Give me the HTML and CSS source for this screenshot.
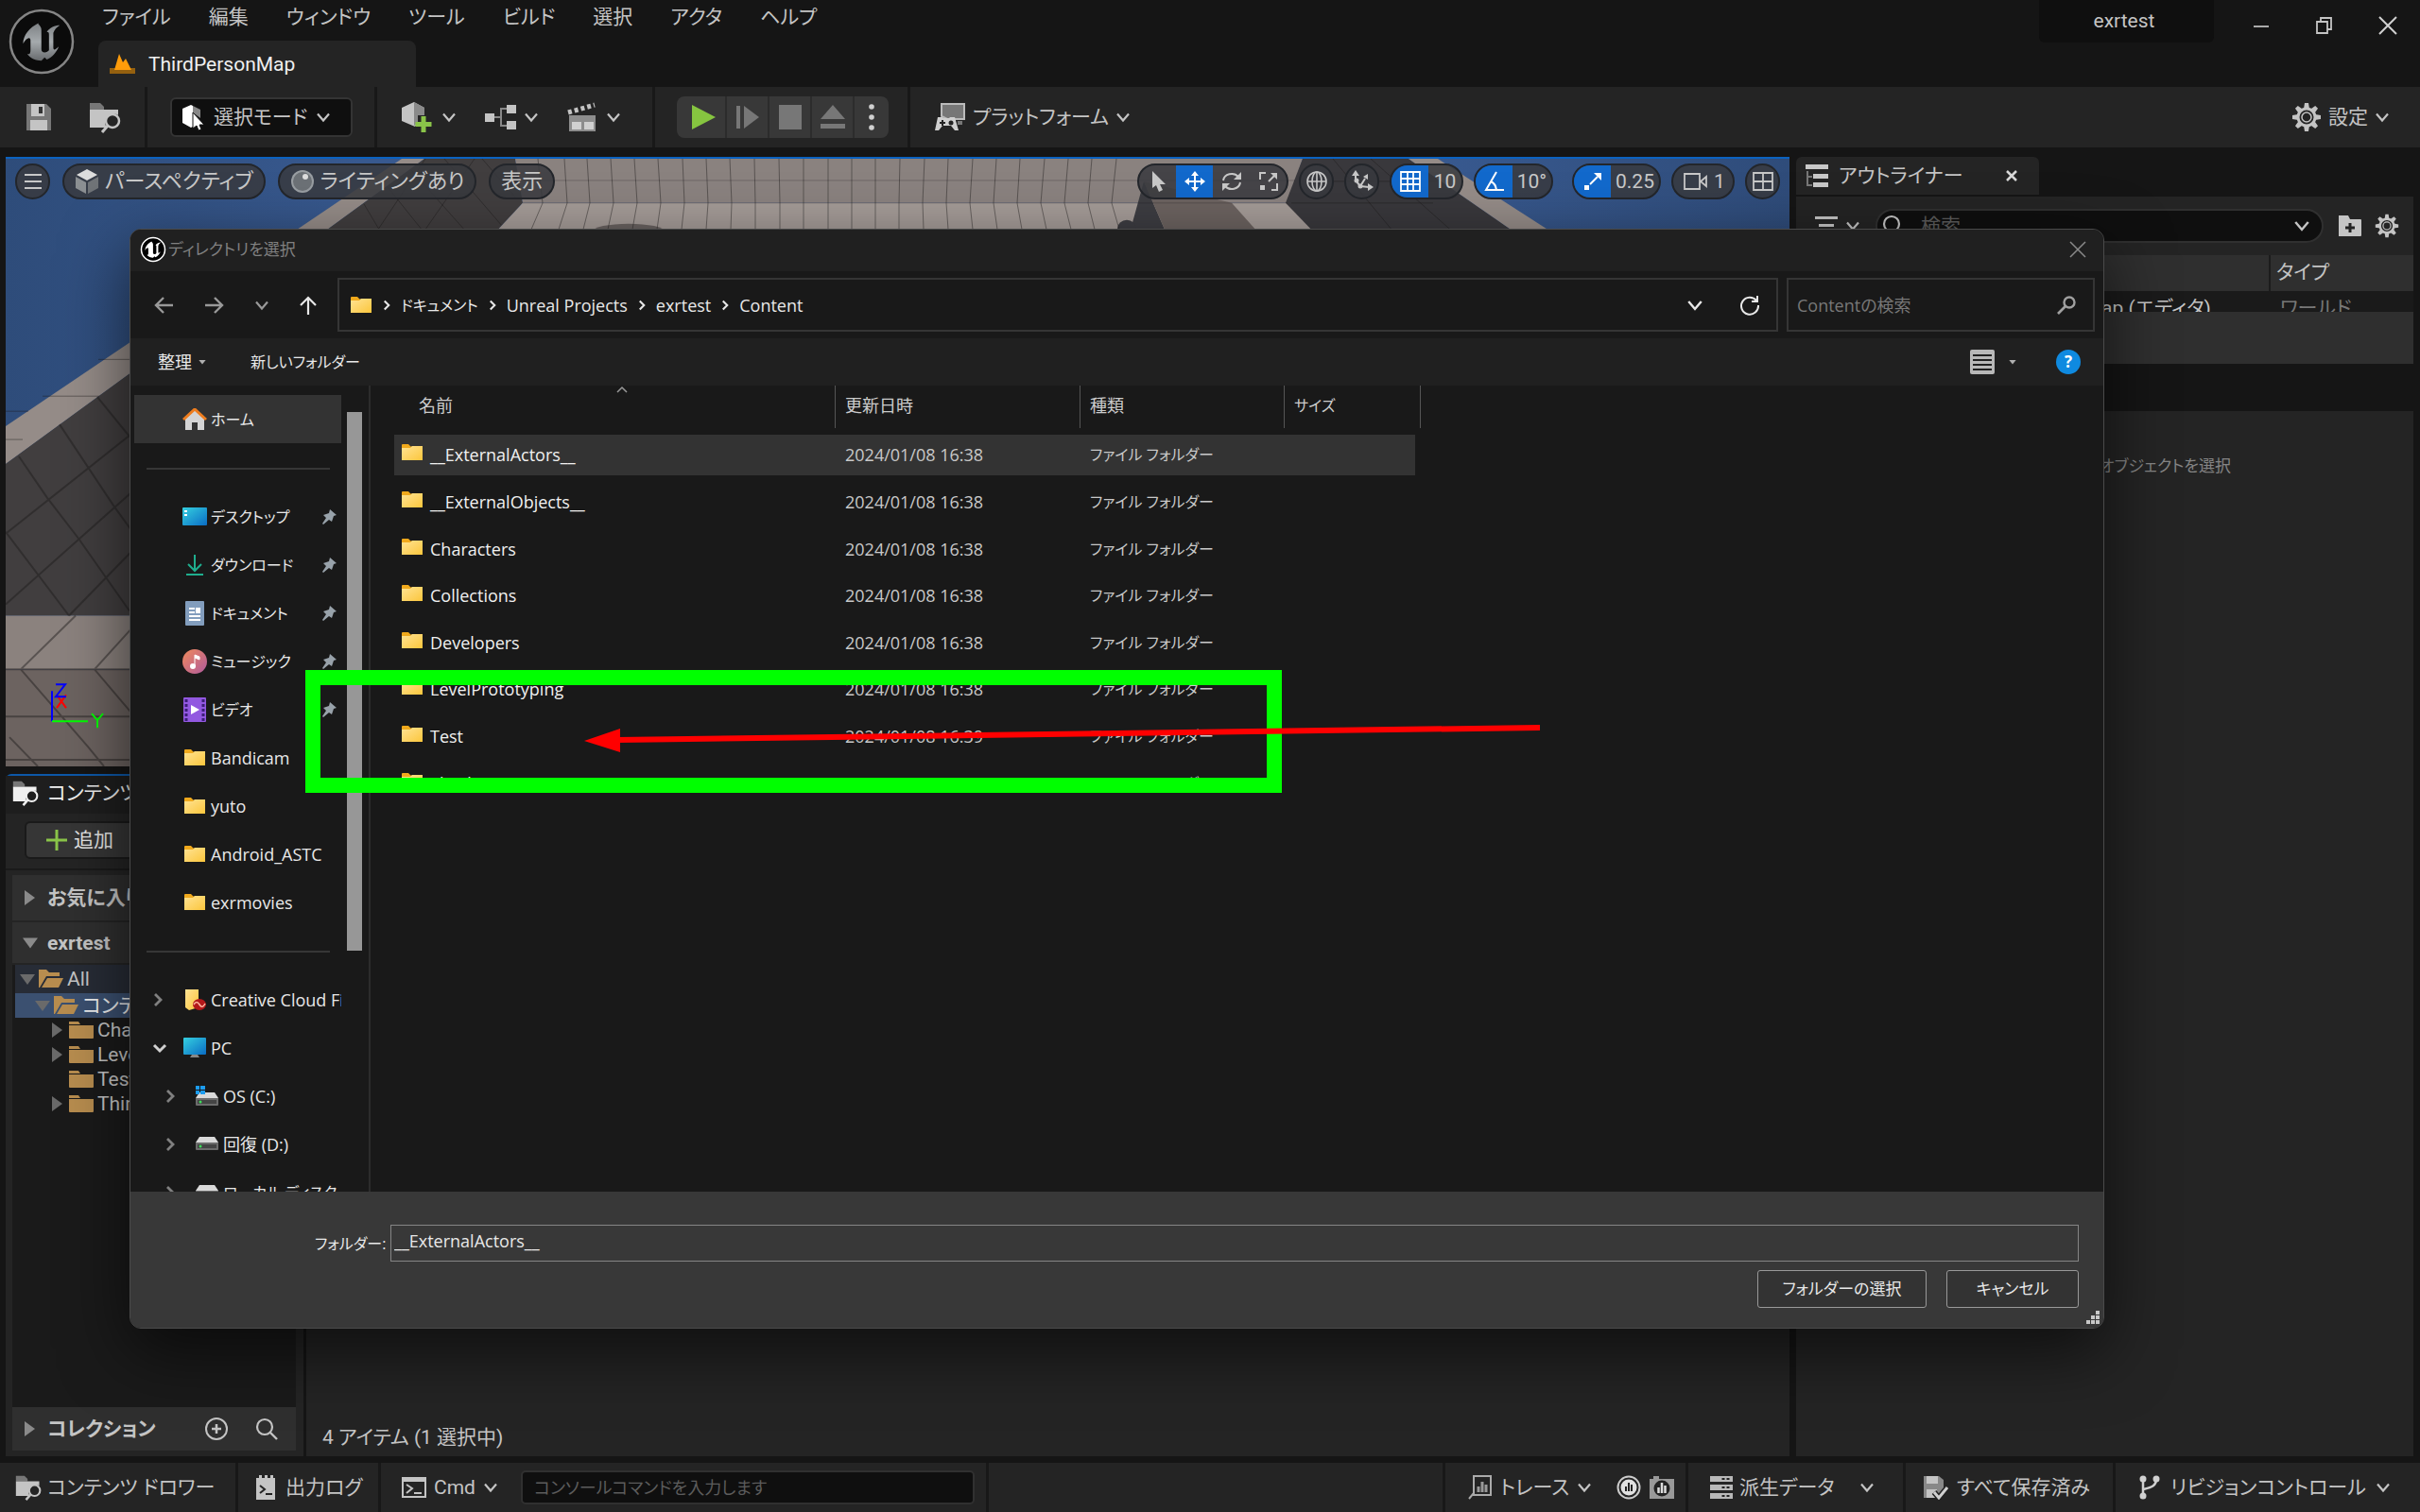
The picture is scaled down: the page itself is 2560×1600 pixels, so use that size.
FILE: index.html
```
<!DOCTYPE html>
<html lang="ja">
<head>
    <meta charset="UTF-8">
    <meta name="viewport" content="width=device-width, initial-scale=1.0">
    <title>exrtest - Unreal Editor</title>
    <link rel="stylesheet" href="styles.css">
</head>
<body>
    <!-- shared icons -->
    <svg class="defs" aria-hidden="true">
        <defs>
            <linearGradient id="gFolder" x1="0" y1="0" x2="1" y2="1"><stop offset="0" stop-color="#ffe394"/><stop offset="1" stop-color="#fbc63c"/></linearGradient>
            <linearGradient id="gBlue" x1="0" y1="0" x2="1" y2="1"><stop offset="0" stop-color="#35d0e0"/><stop offset="1" stop-color="#0a6cc4"/></linearGradient>
            <linearGradient id="gMusic" x1="0" y1="0" x2="1" y2="1"><stop offset="0" stop-color="#f08a5c"/><stop offset="1" stop-color="#b05a9c"/></linearGradient>
            <linearGradient id="gMetal" x1="0" y1="0" x2="0" y2="1"><stop offset="0" stop-color="#7d8184"/><stop offset=".5" stop-color="#a5aaad"/><stop offset="1" stop-color="#686b6e"/></linearGradient>
            <linearGradient id="gSky" x1="0" y1="0" x2="1" y2="0"><stop offset="0" stop-color="#2e4c7a"/><stop offset=".2" stop-color="#38598f"/><stop offset=".8" stop-color="#38598f"/><stop offset="1" stop-color="#2f4c7a"/></linearGradient>
        </defs>
        <symbol id="chev" viewBox="0 0 16 16"><path d="M2 4.500l6 7 6-7" fill="none" stroke="currentColor" stroke-width="2.200"/></symbol>
        <symbol id="u" viewBox="0 0 40 40"><path d="M17 3C9 7 3 14 3 22c2-4 5-6 6-5 1 .5.800 2 .800 4v7c0 3-1 4-3 3.500 3 4 8 6 13 6l3-3 2 2c5-2 9-7 11-12-3 3-5 4-5 1V12c1-3 3-5 6-7-5 0-9 2-12 6 2 0 2 1 2 3v14c-1 1-2 2-4 2-2-.2-3-1-3-3V12c0-3 .500-5-2.800-8z"/></symbol>
        <symbol id="save" viewBox="0 0 30 30"><path d="M2 1h21l5 5v23H2z" fill="#777"/><path d="M7 1h14v13H7zM6 18h18v11H6z" fill="#c4c4c4"/><path d="M15 4h4v7h-4z" fill="#333"/></symbol>
        <symbol id="browse" viewBox="0 0 34 34"><path d="M1 2h11l4 4v3H1z" fill="#777"/><path d="M1 9h30v6c-3-2-8-2-11 1-4 4-3 9-1 12H1z" fill="currentColor"/><circle cx="25" cy="21" r="7" fill="none" stroke="currentColor" stroke-width="2.500"/><path d="M20 26l-6 7" stroke="currentColor" stroke-width="3"/></symbol>
        <symbol id="gear" viewBox="0 0 32 32"><g fill="currentColor"><path d="M14 1h4l1 6h-6zM14 31h4l1-6h-6z"/><path d="M14 1h4l1 6h-6zM14 31h4l1-6h-6z" transform="rotate(45 16 16)"/><path d="M14 1h4l1 6h-6zM14 31h4l1-6h-6z" transform="rotate(90 16 16)"/><path d="M14 1h4l1 6h-6zM14 31h4l1-6h-6z" transform="rotate(135 16 16)"/></g><circle cx="16" cy="16" r="9" fill="none" stroke="currentColor" stroke-width="3"/><circle cx="16" cy="16" r="5" fill="none" stroke="currentColor" stroke-width="1.500"/></symbol>
        <symbol id="glass" viewBox="0 0 24 24"><circle cx="10" cy="10" r="8" fill="none" stroke="currentColor" stroke-width="2.200"/><path d="M16 16l7 7" stroke="currentColor" stroke-width="2.400"/></symbol>
        <symbol id="folder" viewBox="0 0 24 18"><path d="M1 1q0-1 1-1h6l2.500 2.500H14V6H1z" fill="#f0a91c"/><path d="M1 4h9l2-2h11v15H1z" fill="url(#gFolder)"/></symbol>
        <symbol id="ufold" viewBox="0 0 26 20"><path d="M0 1h10l2 3H0zM0 5h26v13q0 1-1 1H1q-1 0-1-1z" fill="#b88d4f"/></symbol>
        <symbol id="uopen" viewBox="0 0 26 20"><path d="M0 0h8l3 3h11v4H8L1 19H0z" fill="#b88d4f"/><path d="M9 9h17l-5 10H3z" fill="#b88d4f"/></symbol>
        <symbol id="pin" viewBox="0 0 18 18"><path d="M10 1l7 6-3 1-2 6-3-2-6 5-1-1 4-6-3-3 6-2z" fill="#98a2aa"/></symbol>
        <symbol id="gt" viewBox="0 0 12 16"><path d="M3 2l6 6-6 6" fill="none" stroke="currentColor" stroke-width="2.800"/></symbol>
        <symbol id="drive" viewBox="0 0 24 15"><path d="M4 0h16l4 6H0z" fill="#dadada"/><path d="M0 6h24v7q0 1-1 1H1q-1 0-1-1z" fill="#6c6c6c"/><path d="M2 8h20v4H2z" fill="#444"/><circle cx="5" cy="10" r="1.500" fill="#3ddc5a"/></symbol>
        <symbol id="cube" viewBox="0 0 26 28"><path d="M13 1l11 6-11 6L2 7z" fill="#ddd"/><path d="M1 9l11 6v12L1 21z" fill="#8b8f92"/><path d="M25 9l-11 6v12l11-6z" fill="#6f7377"/></symbol>
    </svg>

    <header class="titlebar">
        <div class="logo">
            <svg width="70" height="70" viewBox="0 0 70 70"><circle cx="35" cy="35" r="33" fill="#0b0b0b" stroke="#858585" stroke-width="2.500"/><use href="#u" x="12" y="12" width="46" height="46" fill="url(#gMetal)"/></svg>
        </div>
        <div class="title-main">
            <nav class="menu">
                <a>ファイル</a><a>編集</a><a>ウィンドウ</a><a>ツール</a><a>ビルド</a><a>選択</a><a>アクタ</a><a>ヘルプ</a>
            </nav>
            <div class="level-tab">
                <svg width="27" height="22" viewBox="0 0 27 22"><path d="M0 15h27v6H0z" fill="#94600f"/><path d="M5 17L10 0l4 9 3-4 6 12z" fill="#ff9c0a"/></svg>
                <span>ThirdPersonMap</span>
            </div>
        </div>
        <div class="project">exrtest</div>
        <div class="win-buttons">
            <button aria-label="最小化"><svg width="20" height="20" viewBox="0 0 20 20"><path d="M2 11h16" stroke="#aaa" stroke-width="2"/></svg></button>
            <button aria-label="元に戻す"><svg width="20" height="20" viewBox="0 0 20 20"><path d="M2 6h11v12H2zM6 6V2h11v12h-4" fill="none" stroke="#c4c4c4" stroke-width="1.800"/></svg></button>
            <button aria-label="閉じる"><svg width="20" height="20" viewBox="0 0 20 20"><path d="M1 1l18 18M19 1L1 19" stroke="#d0d0d0" stroke-width="2"/></svg></button>
        </div>
    </header>

    <div class="toolbar">
        <div class="tools files">
            <button aria-label="保存"><svg width="30" height="30"><use href="#save"/></svg></button>
            <button aria-label="参照"><svg width="34" height="34"><use href="#browse"/></svg></button>
        </div>
        <div class="tools mode">
            <button class="mode-button">
                <svg width="26" height="28" viewBox="0 0 26 28"><path d="M2 5l9-4 2 1v22l-2 1-9-5z" fill="#fff"/><path d="M13 2l8 4v9l-8-6z" fill="#888"/><path d="M13 9v17l4-3 2 5 3-1-2-5h5z" fill="#fff" stroke="#111"/></svg>
                選択モード
                <svg width="16" height="16"><use href="#chev"/></svg>
            </button>
        </div>
        <div class="tools create">
            <button aria-label="追加"><svg width="36" height="34" viewBox="0 0 36 34"><path d="M2 7l13-6 11 6v8h-7v8l-3 4L2 21z" fill="#c4c4c4"/><path d="M15 1l11 6v8h-7v8l-4 3z" fill="#8a8a8a"/><path d="M25 16v17M16.500 24.500h17" stroke="#8ac449" stroke-width="5"/></svg><svg width="16" height="16"><use href="#chev"/></svg></button>
            <button aria-label="ブループリント"><svg width="34" height="28" viewBox="0 0 34 28"><path d="M9 14h9M26 5h-8v18h8" fill="none" stroke="#888" stroke-width="2"/><path d="M1 10h10v9H1zM24 1h10v9H24zM24 18h10v9H24z" fill="#c4c4c4"/></svg><svg width="16" height="16"><use href="#chev"/></svg></button>
            <button aria-label="シネマティクス"><svg width="34" height="32" viewBox="0 0 34 32"><path d="M2 11L30 3" stroke="#c4c4c4" stroke-width="5" stroke-dasharray="4 3"/><path d="M3 14h28v17H3z" fill="#8d8d8d"/><path d="M6 21h10v8H6zM19 21h10v8H19z" fill="#d0d0d0"/></svg><svg width="16" height="16"><use href="#chev"/></svg></button>
        </div>
        <div class="tools run">
            <div class="play-group">
                <button aria-label="プレイ"><svg width="28" height="28" viewBox="0 0 28 28"><path d="M2 1l25 13L2 27z" fill="#86c540"/></svg></button>
                <button aria-label="コマ送り"><svg width="28" height="26" viewBox="0 0 28 26"><path d="M2 1h4v24H2zM10 1l16 12-16 12z" fill="#777"/></svg></button>
                <button aria-label="停止"><svg width="24" height="26" viewBox="0 0 24 26"><path d="M0 0h24v26H0z" fill="#777"/></svg></button>
                <button aria-label="イジェクト"><svg width="28" height="26" viewBox="0 0 28 26"><path d="M14 0l13 15H1zM1 20h26v5H1z" fill="#777"/></svg></button>
                <button aria-label="オプション"><svg width="8" height="28" viewBox="0 0 8 28"><g fill="#d0d0d0"><circle cx="4" cy="3" r="2.800"/><circle cx="4" cy="14" r="2.800"/><circle cx="4" cy="25" r="2.800"/></g></svg></button>
            </div>
        </div>
        <div class="tools platform">
            <button><svg width="34" height="32" viewBox="0 0 34 32"><path d="M8 2h24v16H14L8 15z" fill="#777" stroke="#bbb" stroke-width="2"/><path d="M25 20h5v4h-5z" fill="#777"/><path d="M4 16h5l1 1h6l1-1h5l4 14h-4l-4-5h-9l-4 5H1z" fill="#d0d0d0"/><path d="M6 22h6M9 19v6" stroke="#222" stroke-width="2"/><circle cx="18" cy="22" r="2.500" fill="#222"/></svg>プラットフォーム<svg width="16" height="16"><use href="#chev"/></svg></button>
        </div>
        <div class="tools settings">
            <button><svg width="32" height="32"><use href="#gear"/></svg>設定<svg width="16" height="16"><use href="#chev"/></svg></button>
        </div>
    </div>

    <main class="editor">
        <div class="left-column">
            <section class="viewport">
                <svg class="scene" viewBox="6 166 1887 645" preserveAspectRatio="none">
                    <path d="M6 166h1887v645H6z" fill="url(#gSky)"/>
                    <path d="M6 450L425 166h24L6 490z" fill="#958c88"/>
                    <path d="M6 490L449 166h96l8 47-26 28-170 410H6z" fill="#413e3f"/>
                    <path d="M6 651h300v57H6z" fill="#8b827e"/>
                    <path d="M6 708h300v103H6z" fill="#6c6360"/>
                    <path d="M545 166h833l-16 47H553z" fill="#8a827f"/>
                    <path d="M553 213h809l26 28H527z" fill="#a59c98"/>
                    <path d="M1210 190l22 51h-36z" fill="#3d3d42"/>
                    <path d="M1210 190l93 23 25 28h-96z" fill="#6c6360"/>
                    <path d="M1378 166h112l108 75h-211l-27-28z" fill="#39383c"/>
                    <path d="M1490 166h31l116 75h-39z" fill="#958c88"/>
                    <ellipse cx="665" cy="243" rx="38" ry="8" fill="#6a6361"/>
                    <ellipse cx="1192" cy="240" rx="10" ry="9" fill="#3d3d42"/>
                    <g fill="none" stroke="#1c1a1b" stroke-opacity=".45">
                        <path d="M545 189h825M553 213h809" stroke-opacity=".25"/>
                        <path d="M569 166l5 47-12 28M597 166l3 47-9 28M621 166l3 47-7 28M646 166l3 47-6 28M671 166l3 47-5 28M696 166l3 47-4 28M722 166l2 47-3 28M747 166l2 47-2 28M772 166l2 47-1 28M798 166l1 47v28M824 166l1 47v28M850 166v75M876 166v75M901 166v75M926 166v75M952 166l-1 47v28M978 166l-2 47 1 28M1003 166l-2 47 2 28M1029 166l-3 47 3 28M1054 166l-3 47 4 28M1079 166l-3 47 5 28M1105 166l-4 47 6 28M1130 166l-4 47 7 28M1155 166l-4 47 7 28M1181 166l-5 47 8 28"/>
                        <path d="M385 214l16 27M410 196l36 45M435 178l56 63M470 166l60 70M510 166l36 42M400 241l50-75M450 241l52-75M1410 166l62 75M1450 166l84 75M1366 213h150M1400 190h120"/>
                        <path d="M20 482l30 44 33 43 54 77M103 419l35 43M63 448l57 86 18 25M6 562l67 89M6 564l132-105M6 639l132-118M73 651l65-67" stroke-width="2"/>
                        <path d="M80 651l-58 57 71 82 17 21M138 666l-38 42 38 45M6 708h132M6 758h132M6 804h132M10 780l30 31" stroke-width="2"/>
                        <path d="M6 434h24M45 418h60M104 379h40M6 464h18"/>
                    </g>
                    <path d="M55 763v-32" stroke="#00f" stroke-width="2"/><path d="M55 763h38" stroke="#0f0" stroke-width="2"/>
                    <path d="M60 735l10 14m0-14l-10 14" stroke="#f00" stroke-width="2"/>
                    <path d="M59 724h10l-10 13h11" stroke="#00f" stroke-width="2" fill="none"/>
                    <path d="M97 755l6 7 6-7m-6 7v8" stroke="#0f0" stroke-width="2" fill="none"/>
                </svg>
                <div class="view-tools">
                    <button class="pill round" aria-label="メニュー"><svg width="20" height="18" viewBox="0 0 20 18"><path d="M1 2h18M1 9h18M1 16h18" stroke="currentColor" stroke-width="2"/></svg></button>
                    <button class="pill"><svg width="26" height="28"><use href="#cube"/></svg>パースペクティブ</button>
                    <button class="pill"><svg width="26" height="26" viewBox="0 0 26 26"><circle cx="13" cy="13" r="12" fill="#999ea2"/><circle cx="13" cy="13" r="10" fill="#6c7176"/><circle cx="16" cy="8" r="3" fill="#ddd"/></svg>ライティングあり</button>
                    <button class="pill">表示</button>
                    <div class="view-right">
                        <div class="pill group">
                            <button aria-label="選択"><svg width="20" height="24" viewBox="0 0 20 24"><path d="M4 1v18l4-3 3 7 4-2-3-6h6z" fill="currentColor"/></svg></button>
                            <button class="on" aria-label="移動"><svg width="22" height="22" viewBox="0 0 22 22"><path d="M11 3v16M3 11h16" stroke="currentColor" stroke-width="2"/><path d="M11 0l4 5H7zM11 22l4-5H7zM0 11l5-4v8zM22 11l-5-4v8z" fill="currentColor"/></svg></button>
                            <button aria-label="回転"><svg width="24" height="22" viewBox="0 0 24 22"><path d="M3 10a9 8 0 0 1 16-4M21 12a9 8 0 0 1-16 4" fill="none" stroke="currentColor" stroke-width="2"/><path d="M22 1v8h-8zM2 21v-8h8z" fill="currentColor"/></svg></button>
                            <button aria-label="拡大縮小"><svg width="20" height="20" viewBox="0 0 20 20"><path d="M1 8V1h6M19 12v7h-6M10 10l6-6" fill="none" stroke="currentColor" stroke-width="2"/><path d="M12 1h7v7zM1 14h5v5H1z" fill="currentColor"/></svg></button>
                        </div>
                        <button class="pill round" aria-label="座標系"><svg width="24" height="24" viewBox="0 0 24 24"><g fill="none" stroke="currentColor" stroke-width="1.600"><circle cx="12" cy="12" r="10"/><ellipse cx="12" cy="12" rx="5" ry="10"/><path d="M2 12h20M12 2v20"/></g></svg></button>
                        <button class="pill round" aria-label="スナップ"><svg width="24" height="24" viewBox="0 0 24 24"><path d="M5 4v7l5 6M10 17l9 1M10 17l5-8" fill="none" stroke="currentColor" stroke-width="2"/><path d="M5 0l4 6H1zM18 4v6l-5-3zM24 18l-6 4v-8z" fill="currentColor"/><circle cx="6" cy="11" r="2.500" fill="currentColor"/><circle cx="10" cy="17" r="2.500" fill="currentColor"/></svg></button>
                        <div class="pill group"><button class="on" aria-label="グリッド"><svg width="22" height="22" viewBox="0 0 22 22"><path d="M1 1h20v20H1zM8 1v20M14 1v20M1 8h20M1 14h20" fill="none" stroke="currentColor" stroke-width="1.800"/></svg></button><button class="cell">10</button></div>
                        <div class="pill group"><button class="on" aria-label="角度"><svg width="24" height="22" viewBox="0 0 24 22"><path d="M14 1L3 20h19M8 11q5 2 6 9" fill="none" stroke="currentColor" stroke-width="2"/></svg></button><button class="angle">10°</button></div>
                        <div class="pill group wide"><button class="on" aria-label="スケール"><svg width="20" height="20" viewBox="0 0 20 20"><path d="M7 13l8-8" stroke="currentColor" stroke-width="2"/><path d="M11 1h8v8zM1 14h5v5H1z" fill="currentColor"/></svg></button><button class="scale">0.25</button></div>
                        <button class="pill camera"><svg width="26" height="18" viewBox="0 0 26 18"><path d="M1 1h16v16H1zM18 9l6-5v10z" fill="none" stroke="currentColor" stroke-width="1.800"/></svg>1</button>
                        <button class="pill round" aria-label="レイアウト"><svg width="22" height="20" viewBox="0 0 22 20"><path d="M1 1h20v18H1zM11 1v18M1 10h20" fill="none" stroke="currentColor" stroke-width="1.800"/></svg></button>
                    </div>
                </div>
            </section>

            <section class="browser">
                <div class="browser-tab"><svg width="28" height="28"><use href="#browse"/></svg>コンテンツ ブラウザ</div>
                <div class="browser-bar"><button class="add"><svg width="22" height="22" viewBox="0 0 22 22"><path d="M11 0v22M0 11h22" stroke="#8ac449" stroke-width="3"/></svg>追加</button></div>
                <div class="browser-body">
                    <aside class="sources">
                        <h3><i class="tri right"></i>お気に入り</h3>
                        <h3 class="open"><i class="tri down"></i>exrtest</h3>
                        <ul class="tree">
                            <li class="root"><i class="tri down"></i><svg width="26" height="20"><use href="#uopen"/></svg>All</li>
                            <li class="picked"><i class="tri down"></i><svg width="26" height="20"><use href="#uopen"/></svg>コンテンツ</li>
                            <li class="sub"><i class="tri right"></i><svg width="26" height="20"><use href="#ufold"/></svg>Characters</li>
                            <li class="sub"><i class="tri right"></i><svg width="26" height="20"><use href="#ufold"/></svg>LevelPrototyping</li>
                            <li class="sub"><i class="tri none"></i><svg width="26" height="20"><use href="#ufold"/></svg>Test</li>
                            <li class="sub"><i class="tri right"></i><svg width="26" height="20"><use href="#ufold"/></svg>ThirdPerson</li>
                        </ul>
                        <h3 class="collections"><i class="tri right"></i><span>コレクション</span>
                            <button aria-label="コレクションを追加"><svg width="26" height="26" viewBox="0 0 26 26"><circle cx="13" cy="13" r="11" fill="none" stroke="currentColor" stroke-width="2"/><path d="M13 8v10M8 13h10" stroke="currentColor" stroke-width="2.500"/></svg></button>
                            <button aria-label="検索"><svg width="24" height="24"><use href="#glass"/></svg></button>
                        </h3>
                    </aside>
                    <div class="assets">4 アイテム (1 選択中)</div>
                </div>
            </section>
        </div>

        <div class="right-column">
            <div class="outliner-tab">
                <svg width="24" height="24" viewBox="0 0 24 24"><path d="M0 0h24v5H0zM8 10h16v5H8zM8 19h16v5H8z" fill="#c8c8c8"/><path d="M2 7v15h5M2 13h5" fill="none" stroke="#777" stroke-width="2"/></svg>
                <span>アウトライナー</span>
                <button aria-label="閉じる"><svg width="12" height="12" viewBox="0 0 12 12"><path d="M1 1l10 10M11 1L1 11" stroke="#d8d8d8" stroke-width="2.500"/></svg></button>
            </div>
            <section class="outliner">
                <div class="outliner-search">
                    <button aria-label="フィルター"><svg width="24" height="20" viewBox="0 0 24 20"><path d="M0 0h24v3H0zM4 8h16v3H4zM8 16h8v3H8z" fill="currentColor"/></svg><svg width="16" height="16"><use href="#chev"/></svg></button>
                    <label class="search-box"><svg width="24" height="24"><use href="#glass"/></svg><input type="text" placeholder="検索" aria-label="検索"><svg width="18" height="18"><use href="#chev"/></svg></label>
                    <button aria-label="フォルダを作成"><svg width="24" height="22" viewBox="0 0 24 22"><path d="M0 0h10l2 4h11q1 0 1 1v16q0 1-1 1H0z" fill="#c4c4c4"/><path d="M12 8v10M7 13h10" stroke="#222" stroke-width="3"/></svg></button>
                    <button aria-label="設定"><svg width="26" height="26"><use href="#gear"/></svg></button>
                </div>
                <div class="outliner-head"><span></span><span>タイプ</span></div>
                <div class="outliner-row"><span>ThirdPersonMap (エディタ)</span><span>ワールド</span></div>
                <div class="outliner-foot"></div>
            </section>
            <section class="details">オブジェクトを選択</section>
        </div>
    </main>

    <footer class="status">
        <div class="seg drawer"><svg width="28" height="30"><use href="#browse"/></svg>コンテンツ ドロワー</div>
        <div class="seg log"><svg width="22" height="26" viewBox="0 0 22 26"><path d="M1 3h3V0h3v3h3V0h3v3h3V0h3v3h2v23H1z" fill="#c4c4c4"/><path d="M5 11l5 4-5 4M11 20h7" fill="none" stroke="#222" stroke-width="2"/></svg>出力ログ</div>
        <div class="seg cmd">
            <svg width="26" height="22" viewBox="0 0 26 22"><path d="M1 1h24v20H1z" fill="none" stroke="#c4c4c4" stroke-width="2"/><path d="M1 1h24v4H1z" fill="#c4c4c4"/><path d="M5 8l6 4-6 5M13 17h8" fill="none" stroke="#c4c4c4" stroke-width="2"/></svg>
            <span>Cmd</span><svg width="16" height="16"><use href="#chev"/></svg>
            <input type="text" placeholder="コンソールコマンドを入力します" aria-label="コンソールコマンド">
        </div>
        <div class="seg grow"></div>
        <div class="seg trace">
            <svg width="26" height="26" viewBox="0 0 26 26"><path d="M6 1h18v20H6zM6 1v18l-5 6" fill="none" stroke="#aaa" stroke-width="2"/><path d="M11 12v6M15 7v11M19 10v8" stroke="#999" stroke-width="3"/></svg>
            <span>トレース</span><svg width="16" height="16"><use href="#chev"/></svg>
            <svg class="rec" width="26" height="26" viewBox="0 0 26 26"><circle cx="13" cy="13" r="11.500" fill="none" stroke="#ccc" stroke-width="2"/><circle cx="13" cy="13" r="8.500" fill="#e0e0e0"/><path d="M10 12v5M13 8v9M16 10v7" stroke="#222" stroke-width="2"/></svg>
            <svg width="28" height="26" viewBox="0 0 28 26"><path d="M1 4h4V1h6v3h16v21H1z" fill="#999"/><circle cx="14" cy="14" r="8.500" fill="#222"/><path d="M10.500 13v6M14 8v11M17.500 11v8" stroke="#ddd" stroke-width="2.500"/></svg>
        </div>
        <div class="seg data"><svg width="24" height="24" viewBox="0 0 24 24"><path d="M0 0h24v6H0zM0 9h24v6H0zM0 18h24v6H0z" fill="#b8b8b8"/><path d="M14 2v2M19 2v2M14 11v2M19 11v2M14 20v2M19 20v2" stroke="#222" stroke-width="3"/></svg><span>派生データ</span><svg width="16" height="16"><use href="#chev"/></svg></div>
        <div class="seg saved"><svg width="28" height="26" viewBox="0 0 28 26"><path d="M1 1h16l5 4v10l-7 9H1z" fill="#888"/><path d="M4 1h12v8H4zM4 15h11v9H4z" fill="#c4c4c4"/><path d="M12 18l5 6 9-11" fill="none" stroke="#222" stroke-width="6"/><path d="M12 18l5 6 9-11" fill="none" stroke="#d0d0d0" stroke-width="3"/></svg>すべて保存済み</div>
        <div class="seg revision"><svg width="24" height="26" viewBox="0 0 24 26"><g fill="#d0d0d0"><circle cx="5" cy="4" r="3.500"/><circle cx="19" cy="4" r="3.500"/><circle cx="5" cy="22" r="3.500"/></g><path d="M5 4v18M19 4c0 8-6 9-14 11" fill="none" stroke="#d0d0d0" stroke-width="2.500"/></svg><span>リビジョンコントロール</span><svg width="16" height="16"><use href="#chev"/></svg></div>
    </footer>

    <div class="dialog" role="dialog" aria-label="ディレクトリを選択">
        <div class="dialog-title">
            <svg width="28" height="28" viewBox="0 0 28 28"><circle cx="14" cy="14" r="12.500" fill="#000" stroke="#fff" stroke-width="1.500"/><use href="#u" x="4" y="4" width="20" height="20" fill="#fff"/></svg>
            <span>ディレクトリを選択</span>
            <button aria-label="閉じる"><svg width="18" height="18" viewBox="0 0 18 18"><path d="M1 1l16 16M17 1L1 17" stroke="#8a8a8a" stroke-width="1.500"/></svg></button>
        </div>
        <div class="address-row">
            <div class="nav">
                <button class="dim" aria-label="戻る"><svg width="22" height="22" viewBox="0 0 22 22"><path d="M21 11H3M11 3l-8 8 8 8" fill="none" stroke="currentColor" stroke-width="2.400"/></svg></button>
                <button class="dim" aria-label="進む"><svg width="22" height="22" viewBox="0 0 22 22"><path d="M2 11h18M12 3l8 8-8 8" fill="none" stroke="currentColor" stroke-width="2.400"/></svg></button>
                <button class="dim" aria-label="履歴"><svg width="16" height="16"><use href="#chev"/></svg></button>
                <button aria-label="上へ"><svg width="20" height="22" viewBox="0 0 20 22"><path d="M10 21V3M2 11l8-8 8 8" fill="none" stroke="currentColor" stroke-width="2.200"/></svg></button>
            </div>
            <div class="path">
                <svg width="24" height="18"><use href="#folder"/></svg>
                <svg width="12" height="12"><use href="#gt"/></svg><span class="kana">ドキュメント</span>
                <svg width="12" height="12"><use href="#gt"/></svg><span>Unreal Projects</span>
                <svg width="12" height="12"><use href="#gt"/></svg><span>exrtest</span>
                <svg width="12" height="12"><use href="#gt"/></svg><span>Content</span>
                <button class="end" aria-label="履歴"><svg width="18" height="18"><use href="#chev"/></svg></button>
                <button aria-label="更新"><svg width="22" height="22" viewBox="0 0 22 22"><path d="M18 6a9 9 0 1 0 2 5M19 1v6h-6" fill="none" stroke="currentColor" stroke-width="2"/></svg></button>
            </div>
            <label class="find"><input type="text" placeholder="Contentの検索" aria-label="Contentの検索"><svg width="20" height="20" viewBox="0 0 20 20"><circle cx="13" cy="7" r="5.500" fill="none" stroke="#a0a0a0" stroke-width="2.400"/><path d="M9 11l-8 8" stroke="#a0a0a0" stroke-width="2.600"/></svg></label>
        </div>
        <div class="command-row">
            <button>整理 <i class="caret"></i></button>
            <button class="kana new-folder">新しいフォルダー</button>
            <button class="view" aria-label="表示方法"><svg width="26" height="26" viewBox="0 0 26 26"><rect width="26" height="26" rx="2" fill="#b8b8b8"/><path d="M3 6h20M3 11h20M3 16h20M3 21h20" stroke="#202020" stroke-width="2"/></svg><i class="caret"></i></button>
            <button class="help" aria-label="ヘルプ">?</button>
        </div>
        <div class="dialog-body">
            <ul class="places">
                <li class="home kana"><svg width="26" height="24" viewBox="0 0 26 24"><path d="M3 11l10-9 10 9v12h-7v-8h-6v8H3z" fill="#d4d4d4"/><path d="M1 12L13 1l12 11" fill="none" stroke="#ee7d1e" stroke-width="3"/></svg>ホーム</li>
                <li class="rule"></li>
                <li class="kana"><svg width="26" height="20" viewBox="0 0 26 20"><rect width="26" height="19" rx="1" fill="url(#gBlue)"/><path d="M2 3h3v2H2zM2 7h3v2H2z" fill="#fff"/></svg>デスクトップ<svg class="pin" width="18" height="18"><use href="#pin"/></svg></li>
                <li class="kana"><svg width="26" height="24" viewBox="0 0 26 24"><path d="M13 1v17M6 11l7 7 7-7M4 22h18" fill="none" stroke="#1fae8e" stroke-width="2"/></svg>ダウンロード<svg class="pin" width="18" height="18"><use href="#pin"/></svg></li>
                <li class="kana"><svg width="26" height="26" viewBox="0 0 26 26"><rect x="3" y="0" width="20" height="26" rx="1" fill="#829dbd"/><path d="M7 8h6M7 12h6M7 16h12M7 20h12" stroke="#fff" stroke-width="2"/><path d="M14 7h5v6h-5z" fill="#fff"/></svg>ドキュメント<svg class="pin" width="18" height="18"><use href="#pin"/></svg></li>
                <li class="kana"><svg width="26" height="26" viewBox="0 0 26 26"><circle cx="13" cy="13" r="13" fill="url(#gMusic)"/><circle cx="11" cy="18" r="3" fill="#fff"/><path d="M13 18V6l5 2v3l-5-2" fill="#fff" stroke="#fff"/></svg>ミュージック<svg class="pin" width="18" height="18"><use href="#pin"/></svg></li>
                <li class="kana"><svg width="26" height="26" viewBox="0 0 26 26"><rect x="1" width="24" height="26" rx="1" fill="#9258e0"/><path d="M4 2v23M22 2v23" stroke="#3c1e78" stroke-width="3" stroke-dasharray="3 2"/><path d="M9 8l9 5-9 5z" fill="#fff"/></svg>ビデオ<svg class="pin" width="18" height="18"><use href="#pin"/></svg></li>
                <li><svg width="26" height="18"><use href="#folder"/></svg>Bandicam</li>
                <li><svg width="26" height="18"><use href="#folder"/></svg>yuto</li>
                <li><svg width="26" height="18"><use href="#folder"/></svg>Android_ASTC</li>
                <li><svg width="26" height="18"><use href="#folder"/></svg>exrmovies</li>
                <li class="rule"></li>
                <li><svg class="twist" width="12" height="16"><use href="#gt"/></svg><svg width="26" height="24" viewBox="0 0 26 24"><path d="M3 1h14v19l-10 3-4-3z" fill="url(#gFolder)"/><ellipse cx="18" cy="17" rx="7" ry="6" fill="#b3181a"/><path d="M12 17q3-5 6 0t6-1" fill="none" stroke="#ffb6a0" stroke-width="1.500"/></svg>Creative Cloud Files</li>
                <li><svg class="twist open" width="16" height="16" viewBox="0 0 16 16"><path d="M2 5l6 6 6-6" fill="none" stroke="currentColor" stroke-width="3"/></svg><svg width="26" height="22" viewBox="0 0 26 22"><rect x="1" width="24" height="18" rx="1" fill="url(#gBlue)"/><path d="M10 18h6l2 3H8z" fill="#888"/></svg>PC</li>
                <li class="disk"><svg class="twist" width="12" height="16"><use href="#gt"/></svg><svg width="24" height="22" viewBox="0 0 24 22"><use href="#drive" y="7" width="24" height="15"/><path d="M0 0h4v4H0zM5 0h5v4H5zM0 5h4v4H0zM5 5h5v4H5z" fill="#1c9cf0"/></svg>OS (C:)</li>
                <li class="disk"><svg class="twist" width="12" height="16"><use href="#gt"/></svg><svg width="24" height="15"><use href="#drive"/></svg>回復 (D:)</li>
                <li class="disk kana"><svg class="twist" width="12" height="16"><use href="#gt"/></svg><svg width="24" height="15"><use href="#drive"/></svg>ローカル ディスク</li>
            </ul>
            <div class="scroll"><div class="thumb"></div></div>
            <div class="files-pane">
                <table class="file-list">
                    <thead><tr><th class="name">名前<svg class="sort" width="12" height="8" viewBox="0 0 12 8"><path d="M1 7l5-5 5 5" fill="none" stroke="#999" stroke-width="1.500"/></svg></th><th class="date">更新日時</th><th class="type">種類</th><th class="size kana">サイズ</th></tr></thead>
                    <tbody>
                        <tr class="selected"><td><svg width="24" height="18"><use href="#folder"/></svg>__ExternalActors__</td><td>2024/01/08 16:38</td><td class="kana">ファイル フォルダー</td><td></td></tr>
                        <tr><td><svg width="24" height="18"><use href="#folder"/></svg>__ExternalObjects__</td><td>2024/01/08 16:38</td><td class="kana">ファイル フォルダー</td><td></td></tr>
                        <tr><td><svg width="24" height="18"><use href="#folder"/></svg>Characters</td><td>2024/01/08 16:38</td><td class="kana">ファイル フォルダー</td><td></td></tr>
                        <tr><td><svg width="24" height="18"><use href="#folder"/></svg>Collections</td><td>2024/01/08 16:38</td><td class="kana">ファイル フォルダー</td><td></td></tr>
                        <tr><td><svg width="24" height="18"><use href="#folder"/></svg>Developers</td><td>2024/01/08 16:38</td><td class="kana">ファイル フォルダー</td><td></td></tr>
                        <tr><td><svg width="24" height="18"><use href="#folder"/></svg>LevelPrototyping</td><td>2024/01/08 16:38</td><td class="kana">ファイル フォルダー</td><td></td></tr>
                        <tr><td><svg width="24" height="18"><use href="#folder"/></svg>Test</td><td>2024/01/08 16:39</td><td class="kana">ファイル フォルダー</td><td></td></tr>
                        <tr><td><svg width="24" height="18"><use href="#folder"/></svg>ThirdPerson</td><td>2024/01/08 16:38</td><td class="kana">ファイル フォルダー</td><td></td></tr>
                    </tbody>
                </table>
            </div>
        </div>
        <div class="dialog-foot">
            <div class="folder-row"><label class="kana" for="folder">フォルダー:</label><input id="folder" type="text" value="__ExternalActors__"></div>
            <div class="buttons"><button class="choose">フォルダーの選択</button><button class="cancel">キャンセル</button></div>
            <svg class="grip" width="14" height="14" viewBox="0 0 14 14"><path d="M10 0h4v4h-4zM5 5h4v4H5zM10 5h4v4h-4zM0 10h4v4H0zM5 10h4v4H5zM10 10h4v4h-4z" fill="#c8c8c8"/></svg>
        </div>
    </div>

    <!-- highlight box and arrow over the Test folder -->
    <svg class="mark" width="1308" height="130" viewBox="0 0 1308 130">
        <rect x="8" y="8" width="1017" height="114" fill="none" stroke="#0f0" stroke-width="16"/>
        <path d="M330 74L1306 61" stroke="#f00" stroke-width="6"/>
        <path d="M295 75l38-13v25z" fill="#f00"/>
    </svg>
</body>
</html>
```
FILE: styles.css
```
* { box-sizing: border-box; }
body { margin: 0; height: 100vh; display: flex; flex-direction: column; overflow: hidden; position: relative; background: #151515; color: #c4c4c4; font-family: Roboto, "Noto Sans CJK JP", sans-serif; font-size: 21px; line-height: 24px; font-feature-settings: "palt"; }
button, input { font: inherit; font-feature-settings: inherit; color: inherit; background: none; border: none; padding: 0; margin: 0; }
button { display: flex; align-items: center; }
input { outline: none; min-width: 0; }
input::placeholder { color: #5c5c5c; opacity: 1; }
svg { display: block; flex: none; }
ul { list-style: none; margin: 0; padding: 0; }
.defs { position: absolute; width: 0; height: 0; }

/* title bar */
.titlebar { display: flex; height: 92px; flex: none; }
.logo { width: 104px; padding: 9px; }
.title-main { flex: 1; }
.menu { display: flex; gap: 40px; height: 43px; padding: 6px 4px; white-space: nowrap; }
.level-tab { display: flex; align-items: center; gap: 14px; width: 336px; height: 49px; padding-left: 12px; background: #242424; border-radius: 8px 8px 0 0; color: #f0f0f0; }
.project { width: 185px; height: 45px; padding-right: 5px; line-height: 45px; background: #0f0f0f; border-radius: 0 0 6px 6px; text-align: center; }
.win-buttons { display: flex; gap: 47px; height: 54px; padding: 0 24px 0 40px; }

/* main toolbar */
.toolbar { display: flex; height: 64px; flex: none; background: #242424; }
.tools { display: flex; align-items: center; border-right: 3px solid #181818; }
.files { width: 156px; padding-left: 26px; gap: 38px; }
.mode { width: 243px; padding-left: 24px; }
.mode-button { width: 193px; height: 42px; padding-left: 9px; gap: 9px; background: #0f0f0f; border: 2px solid #343434; border-radius: 6px; }
.create { width: 294px; padding-left: 24px; gap: 29px; }
.create button { gap: 8px; }
.run { width: 270px; padding-left: 23px; }
.play-group { display: flex; width: 224px; height: 44px; background: #383838; border-radius: 8px; }
.play-group button { flex: 1; justify-content: center; border-right: 2px solid #2c2c2c; }
.play-group button:first-child { flex: 0 0 53px; padding-left: 4px; }
.play-group button:last-child { border-right: none; flex: 0 0 36px; }
.platform { padding-left: 25px; border: none; flex: 1; }
.platform button, .settings button { gap: 7px; }
.settings { border: none; padding-right: 32px; }

/* editor */
.editor { display: flex; flex: 1; gap: 7px; padding: 10px 7px 7px 6px; min-height: 0; }
.left-column { flex: 1; min-width: 0; display: flex; flex-direction: column; gap: 8px; }
.viewport { position: relative; flex: 0 0 645px; border-top: 2px solid #0b62c0; overflow: hidden; }
.scene { position: absolute; inset: 0; width: 100%; height: 100%; }
.view-tools { position: relative; display: flex; gap: 13px; padding: 5px 10px; }
.view-right { display: flex; gap: 11px; margin-left: auto; }
.pill { height: 38px; padding: 0 11px; gap: 6px; display: flex; align-items: center; border: 2px solid #23262b; border-radius: 19px; background: rgba(56, 58, 62, .85); color: #c8c8c8; font-size: 22px; white-space: nowrap; }
.view-right .pill { font-size: 21px; }
.round { width: 37px; padding: 0; justify-content: center; }
.group { padding: 0; gap: 0; overflow: hidden; }
.group button { width: 39px; height: 34px; justify-content: center; }
.group .on { background: #1269cc; color: #fff; }
.group .cell { width: 35px; }
.group .angle { width: 41px; }
.group .scale { width: 51px; }
.wide { margin-left: 9px; }
.camera { width: 67px; }

/* content browser */
.browser { flex: 1; min-height: 0; display: flex; flex-direction: column; background: #242424; border-top: 2px solid #0d58a8; border-radius: 6px 0 0 0; }
.browser-tab { display: flex; align-items: center; gap: 9px; height: 40px; padding: 0 0 4px 7px; background: #1e1e1e; color: #f0f0f0; }
.browser-bar { height: 60px; padding: 8px 20px; border-bottom: 2px solid #1a1a1a; }
.add { width: 120px; height: 40px; padding-left: 21px; gap: 7px; background: #363636; border: 2px solid #1a1a1a; border-radius: 6px; color: #e4e4e4; }
.browser-body { flex: 1; display: flex; min-height: 0; }
.sources { width: 318px; padding: 5px 8px 6px 7px; display: flex; flex-direction: column; border-right: 3px solid #151515; }
.sources h3 { display: flex; align-items: center; gap: 10px; height: 48px; margin: 0 0 2px; padding-left: 11px; background: #2f2f2f; font-size: 21px; font-weight: bold; flex: none; }
.sources .open { height: 43px; }
.tri { width: 16px; height: 16px; flex: none; background: #8a8a8a; }
.tri.right { clip-path: polygon(2px 0, 13px 8px, 2px 16px); }
.tri.down { clip-path: polygon(0 3px, 16px 3px, 8px 14px); }
.tri.none { background: none; }
.tree { flex: 1; background: #1a1a1a; padding-left: 3px; }
.tree li { display: flex; align-items: center; gap: 4px; height: 26px; padding-left: 5px; white-space: nowrap; overflow: hidden; }
.tree .root { height: 30px; background: #272c36; }
.tree .picked { padding-left: 21px; background: #3b5070; color: #f0f0f0; }
.tree .sub { padding-left: 37px; }
.tree .tri { background: #6a6a6a; }
.tree .tri.none { background: none; }
.sources .collections { height: 46px; margin: 0; padding-right: 19px; }
.collections span { flex: 1; }
.collections button { margin-left: 18px; }
.assets { flex: 1; display: flex; align-items: flex-end; padding: 0 17px 8px; }

/* outliner */
.right-column { width: 653px; display: flex; flex-direction: column; }
.outliner-tab { display: flex; align-items: center; gap: 11px; width: 257px; height: 40px; padding: 0 23px 0 10px; background: #242424; border-radius: 6px 6px 0 0; }
.outliner-tab span { flex: 1; }
.outliner { margin-top: 2px; background: #242424; }
.outliner-search { display: flex; align-items: center; gap: 16px; height: 62px; padding: 0 15px 0 20px; }
.outliner-search button { gap: 8px; }
.outliner-search button:last-child { margin-left: -2px; }
.search-box { flex: 1; display: flex; align-items: center; gap: 17px; height: 36px; padding: 0 12px 0 5px; background: #0f0f0f; border: 2px solid #303030; border-radius: 18px; }
.search-box input { flex: 1; }
.outliner-head, .outliner-row { display: grid; grid-template-columns: 1fr 153px; height: 38px; line-height: 36px; background: #2f2f2f; }
.outliner-head span + span { border-left: 2px solid #1c1c1c; padding-left: 6px; }
.outliner-row { height: 22px; overflow: hidden; line-height: 36px; background: #1a1a1a; }
.outliner-row span { padding-left: 191px; }
.outliner-row span + span { padding-left: 12px; color: #777; }
.outliner-foot { height: 55px; background: #2f2f2f; }
.details { flex: 1; margin-top: 50px; padding: 46px 193px 0 0; background: #242424; color: #858585; font-size: 17px; text-align: right; }

/* status bar */
.status { display: flex; height: 52px; flex: none; background: #242424; white-space: nowrap; }
.seg { display: flex; align-items: center; border-right: 3px solid #181818; }
.drawer { width: 252px; padding-left: 16px; gap: 6px; }
.log { width: 151px; padding-left: 18px; gap: 10px; }
.cmd { width: 643px; padding-left: 22px; gap: 8px; }
.cmd input { flex: 1; height: 36px; margin: 0 12px 0 16px; padding: 0 12px; background: #0f0f0f; border: 2px solid #303030; border-radius: 5px; font-size: 18px; }
.grow { flex: 1; }
.trace { width: 257px; padding-left: 24px; gap: 8px; }
.trace .rec { margin-left: 18px; }
.data { width: 230px; padding-left: 23px; gap: 7px; }
.data span { flex: 1; }
.data svg:last-child { margin-right: 30px; }
.saved { width: 222px; padding-left: 18px; gap: 8px; }
.revision { width: 322px; padding-left: 24px; gap: 10px; border: none; }

/* directory dialog */
.dialog { position: absolute; inset: 242px 334px 194px 137px; display: flex; flex-direction: column; background: #191919; border: 1px solid #4a4a4a; border-radius: 12px; overflow: hidden; box-shadow: 0 24px 70px rgba(0, 0, 0, .6); color: #e8e8e8; font-family: "Open Sans", "Noto Sans CJK JP", sans-serif; font-size: 18px; white-space: nowrap; }
.kana { font-size: 16px; }
.dialog-title { display: flex; align-items: center; gap: 2px; height: 44px; padding: 0 18px 2px 10px; background: #202020; color: #808080; font-size: 17px; }
.dialog-title span { flex: 1; }
.address-row { display: flex; gap: 9px; height: 71px; padding: 7px 9px 7px 24px; }
.nav { display: flex; justify-content: space-between; width: 174px; margin-right: 12px; }
.dim { color: #999; }
.path { flex: 1; display: flex; align-items: center; gap: 9px; padding: 0 17px 0 11px; border: 2px solid #353535; }
.path .end { margin: 0 29px 0 auto; }
.find { display: flex; align-items: center; width: 326px; padding: 0 18px 0 9px; border: 2px solid #353535; }
.find input { flex: 1; }
.find input::placeholder { color: #777; }
.command-row { display: flex; align-items: center; height: 50px; padding: 0 24px 0 29px; background: #202020; }
.caret { display: inline-block; width: 8px; height: 5px; margin-left: 7px; background: #b0b0b0; clip-path: polygon(0 0, 100% 0, 50% 100%); }
.new-folder { margin-left: 47px; }
.view { margin-left: auto; gap: 8px; }
.help { justify-content: center; width: 26px; height: 26px; margin-left: 42px; border-radius: 50%; background: #0f8ae0; color: #fff; font-weight: bold; font-size: 17px; }
.dialog-body { flex: 1; display: flex; min-height: 0; overflow: hidden; }
.places { width: 223px; padding: 10px 0 0 4px; }
.places li { display: flex; align-items: center; gap: 4px; height: 51px; width: 219px; padding-left: 51px; overflow: hidden; position: relative; }
.places .home { background: #333; }
.places .rule::before { content: ""; position: absolute; left: 13px; right: 12px; top: 26px; height: 2px; background: #363636; }
.places .rule { height: 52px; }
.places .pin { margin-left: auto; margin-right: 4px; }
.twist { position: absolute; left: 19px; color: #808080; }
.twist.open { color: #d0d0d0; }
.places .disk { padding-left: 65px; gap: 5px; }
.disk .twist { left: 32px; }
.scroll { width: 31px; padding: 28px 0 0 6px; border-right: 2px solid #2c2c2c; }
.thumb { width: 16px; height: 570px; background: #979797; }
.files-pane { flex: 1; padding-left: 25px; }
.file-list { width: 1086px; height: 456px; margin-top: -7px; border-collapse: separate; border-spacing: 0 7px; table-layout: fixed; }
.file-list th { position: relative; height: 45px; padding: 0 10px 3px; border-right: 1px solid #555; font-weight: normal; text-align: left; color: #ccc; }
.file-list .name { width: 467px; padding-left: 26px; }
.file-list .date { width: 259px; }
.file-list .type { width: 216px; }
.sort { position: absolute; left: 235px; top: 0; }
.file-list td { padding: 0 10px; color: #c8c8c8; }
.file-list td:first-child { padding-left: 7px; color: #f0f0f0; }
.file-list td svg { display: inline-block; margin-right: 7px; }
.selected td { background: #333; }
.selected td:last-child { background: linear-gradient(90deg, #333 138px, transparent 138px); }
.dialog-foot { position: relative; height: 144px; padding: 35px 26px 0 195px; background: #383838; }
.folder-row { display: flex; align-items: center; gap: 7px; }
.folder-row label { width: 73px; }
.folder-row input { flex: 1; height: 39px; padding: 0 3px 6px; border: 1px solid #858585; }
.buttons { display: flex; justify-content: flex-end; gap: 21px; margin-top: 9px; }
.buttons button { justify-content: center; height: 40px; background: #333; border: 1px solid #999; border-radius: 3px; font-size: 17px; }
.buttons .choose { width: 179px; }
.buttons .cancel { width: 140px; }
.grip { position: absolute; right: 4px; bottom: 4px; }

.mark { position: absolute; left: 323px; top: 709px; }
```
